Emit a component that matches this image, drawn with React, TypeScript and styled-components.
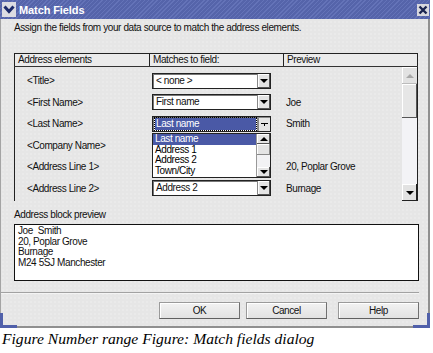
import styled, { createGlobalStyle } from "styled-components";

const GlobalStyle = createGlobalStyle`
  html, body {
    margin: 0;
    padding: 0;
    background: #ffffff;
  }
  body {
    width: 433px;
    height: 353px;
    overflow: hidden;
    font-family: "Liberation Sans", Arial, sans-serif;
  }
`;

type Row = {
  element: string;
  field?: string;
  preview?: string;
  open?: boolean;
};

const rows: Row[] = [
  { element: "<Title>", field: "< none >" },
  { element: "<First Name>", field: "First name", preview: "Joe" },
  { element: "<Last Name>", field: "Last name", preview: "Smith", open: true },
  { element: "<Company Name>" },
  { element: "<Address Line 1>", preview: "20, Poplar Grove" },
  { element: "<Address Line 2>", field: "Address 2", preview: "Burnage" },
];

const listItems = ["Last name", "Address 1", "Address 2", "Town/City"];

const addressLines = ["Joe  Smith", "20, Poplar Grove", "Burnage", "M24 5SJ Manchester"];

function App() {
  return (
    <Page>
      <GlobalStyle />
      <Window>
        <TitleBar>
          <MenuButton>
            <svg width="12" height="9" viewBox="0 0 12 9">
              <polyline points="1.5,1.5 6,6.5 10.5,1.5" fill="none" stroke="#1c2a6a" strokeWidth="3" />
            </svg>
          </MenuButton>
          <Title>Match Fields</Title>
          <CloseButton>
            <svg width="10" height="10" viewBox="0 0 10 10">
              <path d="M1.5 1.5 L8.5 8.5 M8.5 1.5 L1.5 8.5" stroke="#1a2450" strokeWidth="2.4" />
            </svg>
          </CloseButton>
        </TitleBar>

        <Content>
          <Text>Assign the fields from your data source to match the address elements.</Text>

          <Table>
            <HeaderRow>
              <HeaderCell>Address elements</HeaderCell>
              <HeaderCell>Matches to field:</HeaderCell>
              <HeaderCell last>Preview</HeaderCell>
            </HeaderRow>
            <TableBody>
              <Rows>
                {rows.map((r) => (
                  <FieldRow key={r.element}>
                    <ElementCell>{r.element}</ElementCell>
                    <FieldCell>
                      {r.field && (
                        <Combo>
                          <ComboValue focused={r.open}>
                            <span>{r.field}</span>
                          </ComboValue>
                          <ComboButton pressed={r.open}>
                            {r.open ? <SmallArrow /> : <DownArrow />}
                          </ComboButton>
                          {r.open && (
                            <DropList>
                              <ListItems>
                                {listItems.map((item, i) => (
                                  <ListItem key={item} selected={i === 0}>
                                    {item}
                                  </ListItem>
                                ))}
                              </ListItems>
                              <ListScroll>
                                <ListArrowButton>
                                  <UpArrow />
                                </ListArrowButton>
                                <ListThumb />
                                <ListTrough />
                                <ListArrowButton>
                                  <DownArrow />
                                </ListArrowButton>
                              </ListScroll>
                            </DropList>
                          )}
                        </Combo>
                      )}
                    </FieldCell>
                    <PreviewCell>{r.preview}</PreviewCell>
                  </FieldRow>
                ))}
              </Rows>
              <ScrollBar>
                <ScrollUp>
                  <UpArrow disabled />
                </ScrollUp>
                <ScrollThumb />
                <ScrollTrough />
                <ScrollDown>
                  <DownArrow />
                </ScrollDown>
              </ScrollBar>
            </TableBody>
          </Table>

          <BlockLabel>Address block preview</BlockLabel>
          <PreviewBox>
            {addressLines.map((l) => (
              <PreviewLine key={l}>{l}</PreviewLine>
            ))}
          </PreviewBox>

          <Separator />

          <ButtonRow>
            <ButtonGroup>
              <DialogButton>OK</DialogButton>
              <DialogButton>Cancel</DialogButton>
            </ButtonGroup>
            <DialogButton>Help</DialogButton>
          </ButtonRow>
        </Content>

        <Corner side="left" />
        <Corner side="right" />
      </Window>
      <Caption>Figure Number range Figure: Match fields dialog</Caption>
    </Page>
  );
}

const DownArrow = styled.i`
  display: block;
  width: 0;
  height: 0;
  border-left: 4px solid transparent;
  border-right: 4px solid transparent;
  border-top: 4px solid #000;
`;

const SmallArrow = styled.i`
  display: block;
  width: 7px;
  height: 1px;
  background: #000;
  position: relative;
  &::after {
    content: "";
    position: absolute;
    left: 3px;
    top: 1px;
    width: 1px;
    height: 2px;
    background: #000;
  }
`;

const UpArrow = styled.i<{ disabled?: boolean }>`
  display: block;
  width: 0;
  height: 0;
  border-left: 4px solid transparent;
  border-right: 4px solid transparent;
  border-bottom: 4px solid ${(p) => (p.disabled ? "#a8a8a8" : "#000")};
`;

const Page = styled.div`
  display: flex;
  flex-direction: column;
`;

const Window = styled.div`
  position: relative;
  width: 430px;
  height: 328px;
  box-sizing: border-box;
  background-color: #e6e6e6;
  background-image: radial-gradient(#ededed 0.6px, transparent 0.8px);
  background-size: 4px 4px;
  border-left: 1px solid #a4a4a4;
  border-right: 2px solid #909090;
  border-bottom: 2px solid #909090;
  display: flex;
  flex-direction: column;
`;

const TitleBar = styled.div`
  height: 19px;
  margin-left: -1px;
  margin-right: -2px;
  display: flex;
  align-items: center;
  background-color: #5867ad;
  background-image: repeating-linear-gradient(
    135deg,
    #6473b8 0px,
    #6473b8 1px,
    #5564aa 1px,
    #5564aa 3px
  );
`;

const MenuButton = styled.div`
  width: 14px;
  height: 15px;
  margin-left: 2px;
  background: #dcdce2;
  display: flex;
  align-items: center;
  justify-content: center;
`;

const Title = styled.div`
  flex: 1;
  margin-left: 3px;
  color: #ffffff;
  font-weight: bold;
  font-size: 11px;
  letter-spacing: -0.1px;
`;

const CloseButton = styled.div`
  width: 12px;
  height: 12px;
  margin-right: 1px;
  background: #d8d8de;
  display: flex;
  align-items: center;
  justify-content: center;
`;

const Content = styled.div`
  display: flex;
  flex-direction: column;
  padding: 0 9px 0 13px;
  font-size: 10px;
  letter-spacing: -0.4px;
  color: #111;
`;

const Text = styled.div`
  margin-top: 3px;
  line-height: 12px;
  height: 12px;
  white-space: nowrap;
`;

const Table = styled.div`
  margin-top: 19px;
  margin-right: 1px;
  display: flex;
  flex-direction: column;
`;

const HeaderRow = styled.div`
  display: grid;
  grid-template-columns: 135px 134px 1fr;
  height: 14px;
  box-sizing: border-box;
  border-top: 1px solid #222;
  border-bottom: 1px solid #333;
  background: #ebebeb;
`;

const HeaderCell = styled.div<{ last?: boolean }>`
  border-left: 1px solid #222;
  ${(p) => (p.last ? "border-right: 1px solid #222;" : "")}
  padding-left: 3px;
  line-height: 12px;
  white-space: nowrap;
`;

const TableBody = styled.div`
  display: flex;
  height: 134px;
  border-left: 1px solid #222;
`;

const Rows = styled.div`
  flex: 1;
  padding-top: 3px;
  display: flex;
  flex-direction: column;
`;

const FieldRow = styled.div`
  display: grid;
  grid-template-columns: 134px 134px 1fr;
  height: 21.5px;
  align-items: center;
  white-space: nowrap;
`;

const ElementCell = styled.div`
  padding-left: 12px;
`;

const FieldCell = styled.div`
  padding-left: 3px;
  height: 16px;
`;

const PreviewCell = styled.div`
  padding-left: 3px;
`;

const Combo = styled.div`
  position: relative;
  width: 119px;
  height: 16px;
  box-sizing: border-box;
  display: flex;
  background: #fff;
  border: 1px solid #222;
  box-shadow: inset 1px 1px 0 #777;
`;

const ComboValue = styled.div<{ focused?: boolean }>`
  flex: 1;
  display: flex;
  padding: 1px 1px 1px 2px;
  span {
    flex: 1;
    line-height: 12px;
    padding-left: 1px;
    ${(p) =>
      p.focused
        ? `background: #4a59a6; color: #fff; outline: 1px dotted #000; outline-offset: 0;`
        : ""}
  }
`;

const ComboButton = styled.div<{ pressed?: boolean }>`
  width: 13px;
  box-sizing: border-box;
  background: #e4e4e4;
  border-left: 1px solid #888;
  display: flex;
  align-items: center;
  justify-content: center;
  box-shadow: ${(p) =>
    p.pressed ? "inset 1px 1px 0 #888" : "inset -1px -1px 0 #555, inset 1px 1px 0 #fff"};
`;

const DropList = styled.div`
  position: absolute;
  left: -1px;
  top: 16px;
  width: 119px;
  height: 45px;
  box-sizing: border-box;
  background: #fff;
  border: 1px solid #222;
  display: flex;
  z-index: 2;
`;

const ListItems = styled.div`
  flex: 1;
  display: flex;
  flex-direction: column;
`;

const ListItem = styled.div<{ selected?: boolean }>`
  height: 10.75px;
  line-height: 10.75px;
  padding-left: 2px;
  background: ${(p) => (p.selected ? "#4a59a6" : "transparent")};
  color: ${(p) => (p.selected ? "#fff" : "#000")};
`;

const ListScroll = styled.div`
  width: 13px;
  display: flex;
  flex-direction: column;
  background: #f2f2f4;
  border-left: 1px solid #999;
`;

const ListArrowButton = styled.div`
  height: 10px;
  background: #e4e4e4;
  display: flex;
  align-items: center;
  justify-content: center;
  box-shadow: inset -1px -1px 0 #555, inset 1px 1px 0 #fff;
`;

const ListThumb = styled.div`
  height: 11px;
  background: #e4e4e4;
  box-shadow: inset -1px -1px 0 #888, inset 1px 1px 0 #fff;
`;

const ListTrough = styled.div`
  flex: 1;
`;

const ScrollBar = styled.div`
  width: 16px;
  box-sizing: border-box;
  display: flex;
  flex-direction: column;
  border-right: 1px solid #222;
`;

const ScrollUp = styled.div`
  height: 17px;
  display: flex;
  align-items: center;
  justify-content: center;
  background: #e2e2e2;
  box-shadow: inset 0 -1px 0 #bbb, inset 1px 1px 0 #fff;
`;

const ScrollThumb = styled.div`
  height: 34px;
  background: #e6e6e6;
  box-shadow: inset -1px -1px 0 #555, inset 1px 1px 0 #fff;
`;

const ScrollTrough = styled.div`
  flex: 1;
  background: #f3f3f6;
`;

const ScrollDown = styled.div`
  height: 17px;
  display: flex;
  align-items: center;
  justify-content: center;
  background: #e2e2e2;
  box-shadow: inset -1px -1px 0 #222, inset 1px 1px 0 #fff;
`;

const BlockLabel = styled.div`
  margin-top: 8px;
  line-height: 12px;
  height: 12px;
`;

const PreviewBox = styled.div`
  margin-top: 3px;
  height: 57px;
  box-sizing: border-box;
  background: #fff;
  border: 1px solid #111;
  padding: 1px 3px;
`;

const PreviewLine = styled.div`
  line-height: 10.7px;
  white-space: pre;
`;

const Separator = styled.div`
  margin: 11px 0 0 -13px;
  height: 1px;
  background: #a2a2a2;
  border-bottom: 1px solid #f4f4f4;
`;

const ButtonRow = styled.div`
  margin-top: 8px;
  display: flex;
  justify-content: flex-end;
  gap: 11px;
`;

const ButtonGroup = styled.div`
  display: flex;
  gap: 6px;
`;

const DialogButton = styled.div`
  width: 81px;
  height: 17px;
  box-sizing: border-box;
  display: flex;
  align-items: center;
  justify-content: center;
  background: linear-gradient(#f2f2f2, #e2e2e2);
  border: 1px solid #9a9a9a;
  border-bottom-color: #606060;
  border-right-color: #707070;
  box-shadow: inset 1px 1px 0 #fff;
`;

const Corner = styled.div<{ side: "left" | "right" }>`
  position: absolute;
  bottom: -2px;
  ${(p) => (p.side === "left" ? "left: -1px;" : "right: -2px;")}
  width: 17px;
  height: 15px;
  box-sizing: border-box;
  border-bottom: 3px solid #5060aa;
  ${(p) =>
    p.side === "left"
      ? "border-left: 3px solid #5060aa;"
      : "border-right: 3px solid #5060aa;"}
`;

const Caption = styled.div`
  margin-top: 1px;
  padding-left: 2px;
  font-family: "Liberation Serif", "Times New Roman", serif;
  font-style: italic;
  font-size: 15.6px;
  line-height: 20px;
  color: #000;
  white-space: nowrap;
`;

export default App;
